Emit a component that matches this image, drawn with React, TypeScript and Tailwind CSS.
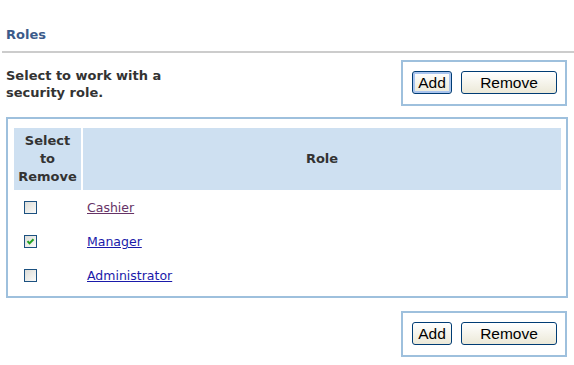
import React from 'react';

const roles = [
  { name: 'Cashier', checked: false, visited: true },
  { name: 'Manager', checked: true, visited: false },
  { name: 'Administrator', checked: false, visited: false },
];

function Checkbox({ checked }: { checked: boolean }) {
  return (
    <div className="w-[13px] h-[13px] border border-[#1c5180] bg-gradient-to-br from-[#dcdcd7] to-[#fbfbf9] flex items-center justify-center">
      {checked && (
        <svg width="9" height="9" viewBox="0 0 9 9">
          <path d="M1.5 4.2 L3.5 6.4 L7.5 2.2" fill="none" stroke="#21a121" strokeWidth="2" />
        </svg>
      )}
    </div>
  );
}

function XpButton({ label, focused, width }: { label: string; focused?: boolean; width: string }) {
  return (
    <button
      className={`${width} h-[23px] rounded-[3px] border border-[#003c74] bg-gradient-to-b from-white to-[#ece9d8] text-black text-[15.5px] leading-none font-['Liberation_Sans',Arial,sans-serif] flex items-center justify-center ${
        focused ? 'shadow-[inset_0_0_0_2px_#a9c4ee]' : ''
      }`}
    >
      {label}
    </button>
  );
}

function ButtonBar({ focused }: { focused?: boolean }) {
  return (
    <div className="ml-auto mr-[7px] w-[166px] h-[46px] border-2 border-[#9ec0dd] flex items-start gap-[9px] pl-[9px] pt-[9px]">
      <XpButton label="Add" focused={focused} width="w-[40px]" />
      <XpButton label="Remove" width="w-[96px]" />
    </div>
  );
}

export default function App() {
  return (
    <div className="w-[574px] h-[365px] bg-white font-['DejaVu_Sans',Verdana,sans-serif] pt-[27px] overflow-hidden">
      <h1 className="pl-[6px] text-[13px] leading-[16px] font-bold text-[#3b5b8a]">Roles</h1>
      <div className="mt-[8px] ml-[2px] h-[2px] bg-[#cccccc]" />

      <div className="flex items-start pt-[7px]">
        <p className="mt-[7px] pl-[6px] w-[200px] text-[13px] leading-[17px] font-bold text-[#333333]">
          Select to work with a security role.
        </p>
        <ButtonBar focused />
      </div>

      <div className="mt-[11px] ml-[6px] w-[562px] h-[181px] border-2 border-[#9ec0dd] pt-[9px] pl-[6px] pr-[5px]">
        <div className="grid grid-cols-[67px_1fr] gap-x-[2px] h-[62px] text-[13px] font-bold text-[#333333]">
          <div className="bg-[#cee0f1] flex items-center justify-center text-center leading-[18px]">
            Select
            <br />
            to
            <br />
            Remove
          </div>
          <div className="bg-[#cee0f1] flex items-center justify-center">Role</div>
        </div>
        {roles.map((role) => (
          <div key={role.name} className="grid grid-cols-[67px_1fr] gap-x-[2px] h-[34px] items-center">
            <div className="pl-[10px]">
              <Checkbox checked={role.checked} />
            </div>
            <div className="pl-[4px]">
              <a
                href="#"
                className={`text-[12.5px] underline ${role.visited ? 'text-[#663366]' : 'text-[#1a1aaa]'}`}
              >
                {role.name}
              </a>
            </div>
          </div>
        ))}
      </div>

      <div className="flex mt-[13px]">
        <ButtonBar />
      </div>
    </div>
  );
}
